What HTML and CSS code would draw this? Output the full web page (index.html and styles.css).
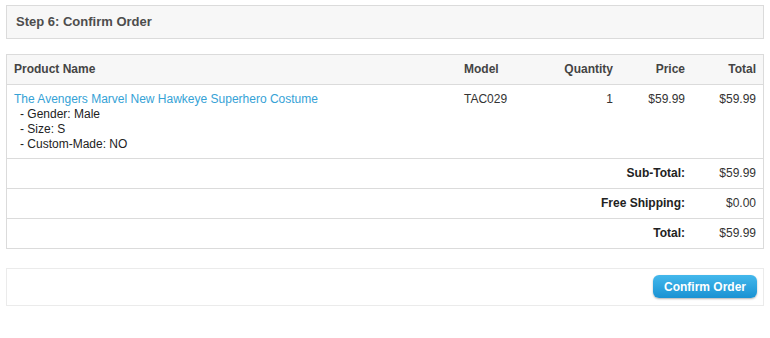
FILE: index.html
```html
<!DOCTYPE html>
<html lang="en">
<head>
    <meta charset="UTF-8">
    <title>Checkout - Confirm Order</title>
    <link rel="stylesheet" href="styles.css">
</head>
<body>
    <div class="checkout">
        <div class="step-heading">Step 6: Confirm Order</div>

        <!-- Order summary -->
        <table class="order-table">
            <thead>
                <tr>
                    <td class="name">Product Name</td>
                    <td class="model">Model</td>
                    <td class="quantity">Quantity</td>
                    <td class="price">Price</td>
                    <td class="total">Total</td>
                </tr>
            </thead>
            <tbody>
                <tr>
                    <td class="name">
                        <a href="#">The Avengers Marvel New Hawkeye Superhero Costume</a>
                        <div class="option">- Gender: Male</div>
                        <div class="option">- Size: S</div>
                        <div class="option">- Custom-Made: NO</div>
                    </td>
                    <td class="model">TAC029</td>
                    <td class="quantity">1</td>
                    <td class="price">$59.99</td>
                    <td class="total">$59.99</td>
                </tr>
            </tbody>
            <tfoot>
                <tr>
                    <td colspan="4" class="price"><b>Sub-Total:</b></td>
                    <td class="total">$59.99</td>
                </tr>
                <tr>
                    <td colspan="4" class="price"><b>Free Shipping:</b></td>
                    <td class="total">$0.00</td>
                </tr>
                <tr>
                    <td colspan="4" class="price"><b>Total:</b></td>
                    <td class="total">$59.99</td>
                </tr>
            </tfoot>
        </table>

        <div class="buttons">
            <button class="button">Confirm Order</button>
        </div>
    </div>
</body>
</html>
```

FILE: styles.css
```css
body {
    font-family: "Liberation Sans", Arial, sans-serif;
    font-size: 12px;
    color: #333;
    background-color: #fff;
    margin: 0;
    padding: 5px 6px;
}
.checkout {
    width: 758px;
}
.step-heading {
    background-color: #f7f7f7;
    border: 1px solid #dbdbdb;
    color: #4d4d4d;
    font-size: 13px;
    font-weight: bold;
    line-height: 15px;
    padding: 8px 9px 9px 9px;
    margin-bottom: 15px;
}
.order-table {
    width: 100%;
    border-collapse: collapse;
    border: 1px solid #dbdbdb;
    margin-bottom: 19px;
}
.order-table td {
    padding: 7px;
    line-height: 15px;
    vertical-align: top;
    border-bottom: 1px solid #dbdbdb;
}
.order-table tbody td {
    padding-bottom: 6px;
}
.order-table thead td {
    background-color: #f7f7f7;
    color: #444;
    font-weight: bold;
}
.order-table .name a {
    color: #35a2d6;
    text-decoration: none;
}
.order-table .option {
    color: #222;
    padding-left: 6px;
}
.order-table .model {
    width: 79px;
}
.order-table .quantity {
    width: 56px;
    text-align: right;
}
.order-table .price {
    width: 58px;
    text-align: right;
}
.order-table .total {
    width: 57px;
    text-align: right;
}
.order-table tfoot td b {
    color: #222;
}
.buttons {
    border: 1px solid #ebebeb;
    padding: 6px 6px 7px;
    display: flex;
    justify-content: flex-end;
}
.button {
    font-family: "Liberation Sans", Arial, sans-serif;
    font-size: 12px;
    font-weight: bold;
    color: #fff;
    background: linear-gradient(#44b8ec, #1a92d3);
    border: none;
    border-radius: 6px;
    box-shadow: 0 1px 2px rgba(0, 0, 0, 0.3);
    width: 104px;
    height: 23px;
    padding: 0;
    cursor: pointer;
}
.button:hover {
    background: #1a92d3;
}
```
